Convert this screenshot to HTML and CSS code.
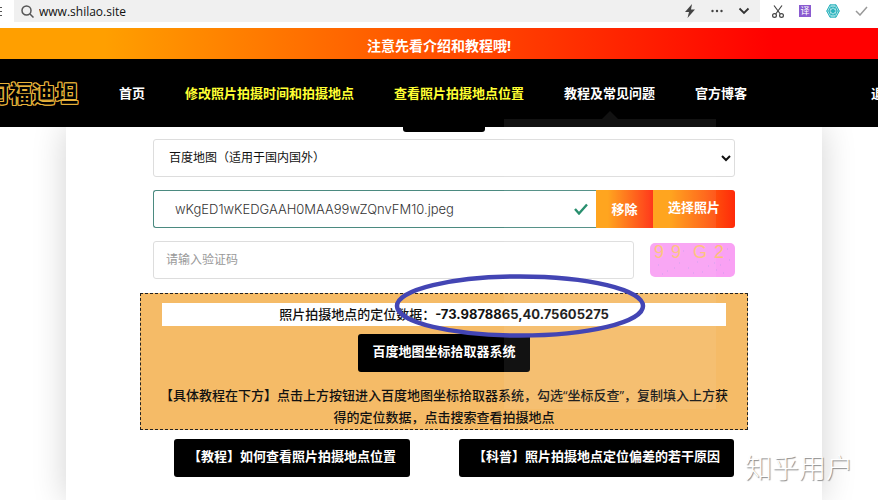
FILE: index.html
```html
<!DOCTYPE html>
<html lang="zh-CN">
<head>
    <meta charset="UTF-8">
    <title>查看照片拍摄地点位置</title>
    <link rel="stylesheet" href="styles.css">
</head>
<body>
    <div class="browser">
        <span class="menu-icon"></span>
        <div class="address">
            <svg class="search" width="13" height="13" viewBox="0 0 13 13">
                <circle cx="5.5" cy="5.5" r="4.5"/>
                <path d="M9 9l3.5 3.5"/>
            </svg>
            <input type="text" class="url" aria-label="网址" value="www.shilao.site">
            <svg width="12" height="14" viewBox="0 0 12 14">
                <path d="M8 0L1 8h4L3.500 14L11 5.500H7z" fill="#444"/>
            </svg>
            <svg width="12" height="4" viewBox="0 0 12 4" fill="#444">
                <circle cx="1.500" cy="2" r="1.200"/>
                <circle cx="6" cy="2" r="1.200"/>
                <circle cx="10.500" cy="2" r="1.200"/>
            </svg>
            <svg width="12" height="8" viewBox="0 0 12 8">
                <path d="M1.500 1.500L6 6l4.500-4.500" fill="none" stroke="#333" stroke-width="1.800"/>
            </svg>
        </div>
        <div class="tools">
            <svg width="12" height="13" viewBox="0 0 12 13" fill="none" stroke="#444" stroke-width="1.200">
                <path d="M2 0.500l6.300 8.500M10 0.500L3.700 9"/>
                <circle cx="2.500" cy="10.500" r="1.900"/>
                <circle cx="9.500" cy="10.500" r="1.900"/>
            </svg>
            <span class="translate">译</span>
            <svg width="14" height="14" viewBox="0 0 14 14" fill="none" stroke="#2ab3bd">
                <path d="M4 0.800h6L13.300 7L10 13.200H4L0.700 7z" fill="#a9e2e5"/>
                <path d="M0.700 7h12.600M4 0.800l6 12.400M10 0.800L4 13.200" stroke-width="0.600"/>
                <circle cx="7" cy="7" r="4"/>
                <circle cx="7" cy="7" r="1.500" fill="#2ab3bd"/>
            </svg>
            <svg width="13" height="10" viewBox="0 0 13 10">
                <path d="M1 5l4 4L12 1" fill="none" stroke="#999" stroke-width="1.500"/>
            </svg>
        </div>
    </div>

    <div class="notice">注意先看介绍和教程哦!</div>

    <header class="header">
        <div class="logo">阿福迪坦</div>
        <nav class="nav">
            <a href="#">首页</a>
            <a href="#" class="hot">修改照片拍摄时间和拍摄地点</a>
            <a href="#" class="hot">查看照片拍摄地点位置</a>
            <div class="dropdown">
                <a href="#">教程及常见问题</a>
                <div class="submenu"></div>
            </div>
            <a href="#">官方博客</a>
        </nav>
        <a href="#" class="logout">退出</a>
    </header>

    <main class="card">
        <button type="button" class="btn top-btn" aria-label="返回"></button>
        <form class="form">
            <select class="field map" aria-label="地图">
                <option>百度地图（适用于国内国外）</option>
            </select>
            <div class="file">
                <input type="text" class="field file-name" aria-label="照片" value="wKgED1wKEDGAAH0MAA99wZQnvFM10.jpeg">
                <svg class="tick" width="14" height="12" viewBox="0 0 14 12">
                    <path d="M1 6l4 4.500L13 1.500" fill="none" stroke="#198764" stroke-width="2.400"/>
                </svg>
                <button type="button" class="fire remove">移除</button>
                <button type="button" class="fire choose">选择照片</button>
            </div>
            <div class="verify">
                <input type="text" class="field code" aria-label="验证码" placeholder="请输入验证码">
                <svg class="captcha" width="85" height="34" viewBox="0 0 85 34">
                    <rect width="85" height="34" fill="#f9a1f4"/>
                    <g fill="#fcc077" font-size="18">
                        <text x="4" y="15">9</text>
                        <text x="21" y="15">9</text>
                        <text x="43" y="15">G</text>
                        <text x="64" y="15">2</text>
                    </g>
                    <path d="M8 22h1M17 28h1M29 20h1M38 25h1M47 19h1M52 29h1M58 23h1M64 20h1M66 27h1M70 22h1M73 30h1M79 17h1M33 8h1M77 6h1M12 31h1M43 30h1M24 25h1" stroke="#cf9bec"/>
                </svg>
            </div>
        </form>

        <section class="result">
            <p class="location">照片拍摄地点的定位数据：<b>-73.9878865,40.75605275</b></p>
            <button type="button" class="btn">百度地图坐标拾取器系统</button>
            <p class="tips">【具体教程在下方】点击上方按钮进入百度地图坐标拾取器系统，勾选“坐标反查”，复制填入上方获得的定位数据，点击搜索查看拍摄地点</p>
            <svg class="circle" width="252" height="66" viewBox="0 0 252 66">
                <ellipse cx="126" cy="33" rx="123" ry="29.500" fill="none" stroke="#4345b4" stroke-width="4.500"/>
            </svg>
        </section>

        <div class="links">
            <button type="button" class="btn">【教程】如何查看照片拍摄地点位置</button>
            <button type="button" class="btn">【科普】照片拍摄地点定位偏差的若干原因</button>
        </div>
    </main>

    <div class="watermark">知乎用户</div>
</body>
</html>
```
FILE: styles.css
```css
*{
    margin: 0;
    padding: 0;
    box-sizing: border-box;
}
html{
    overflow: hidden;
}
body{
    min-height: 100vh;
    display: flex;
    flex-direction: column;
    background: #fff;
    color: #111;
    font-family: "Open Sans","Noto Sans CJK SC",sans-serif;
    font-size: 13px;
}
button,input,select{
    font: inherit;
    color: inherit;
}
button{
    border: 0;
    white-space: nowrap;
    cursor: pointer;
}
a{
    color: inherit;
    text-decoration: none;
}

/* 浏览器地址栏 */
.browser{
    height: 28px;
    display: flex;
    align-items: flex-start;
}
.menu-icon{
    width: 2px;
    height: 9px;
    margin: 7px 12px 0 0;
    background: repeating-linear-gradient(#555 0 1px,#fff 1px 4px);
}
.address{
    flex: 1;
    height: 22px;
    display: flex;
    align-items: center;
    gap: 15px;
    padding: 0 10px 0 7px;
    background: #f0f0f0;
}
.search{
    margin-right: -10px;
    fill: none;
    stroke: #555;
    stroke-width: 1.5;
}
.url{
    flex: 1;
    min-width: 0;
    border: 0;
    background: none;
    font-size: 12px;
}
.tools{
    height: 22px;
    display: flex;
    align-items: center;
    gap: 15px;
    padding: 0 10px 0 12px;
}
.translate{
    width: 12px;
    height: 12px;
    line-height: 12px;
    text-align: center;
    font-size: 9px;
    color: #fff;
    background: #8a5bd0;
}

.notice{
    height: 31px;
    line-height: 35px;
    text-align: center;
    font-size: 14px;
    font-weight: bold;
    color: #fff;
    background: linear-gradient(90deg,#ff9f00 12%,#f00 88%);
}

/* 导航 */
.header{
    position: relative;
    z-index: 2;
    height: 68px;
    display: flex;
    align-items: center;
    padding-bottom: 2px;
    background: #000;
    color: #fff;
    font-weight: bold;
}
.logo{
    margin: 0 41px 0 -14px;
    font-size: 23px;
    color: #000;
    text-shadow: 1px 0 #e8b23a,-1px 0 #e8b23a,0 1px #e8b23a,0 -1px #e8b23a,1px 1px #e8b23a,-1px -1px #e8b23a,1px -1px #e8b23a,-1px 1px #e8b23a;
}
.nav{
    display: flex;
    gap: 40px;
    white-space: nowrap;
}
.hot{
    color: #ff3;
}
.dropdown{
    position: relative;
}
.submenu{
    position: absolute;
    top: 36px;
    left: 50%;
    width: 212px;
    height: 290px;
    margin-left: -106px;
    background: rgba(255,255,255,.07);
}
.submenu::before{
    content: "";
    position: absolute;
    bottom: 100%;
    left: 50%;
    margin-left: -8px;
    border: 8px solid transparent;
    border-top: 0;
    border-bottom-color: rgba(255,255,255,.07);
}
.logout{
    margin: 0 -19px 0 auto;
    white-space: nowrap;
}

/* 内容 */
.card{
    flex: 1;
    margin: 0 56px 0 66px;
    padding: 0 74px 23px;
    display: flex;
    flex-direction: column;
    align-items: center;
    background: #fff;
    box-shadow: 0 0 32px rgba(0,0,0,.18);
}
.btn{
    height: 38px;
    padding: 0 14px 5px;
    border-radius: 3px;
    background: #000;
    color: #fff;
    font-weight: bold;
}
.top-btn{
    width: 82px;
    margin: -33px 0 7px;
}
.form{
    width: 100%;
    padding: 0 13px;
    display: flex;
    flex-direction: column;
    gap: 13px;
}
.field{
    height: 38px;
    border: 1px solid #ddd;
    border-radius: 3px;
    background: #fff;
    font-size: 12px;
}
.map{
    width: 100%;
    padding: 0 0 2px 11px;
}
.file{
    display: flex;
    align-items: center;
}
.file-name{
    flex: 1;
    min-width: 0;
    padding: 0 36px 0 21px;
    border-color: #4b8a80;
    border-right: 0;
    border-radius: 3px 0 0 3px;
    color: #333;
    font-family: Inter,sans-serif;
    font-size: 13px;
    font-weight: 300;
}
.tick{
    margin: 0 8px 0 -22px;
}
.fire{
    height: 38px;
    padding-bottom: 2px;
    color: #fff;
    font-weight: bold;
    background: linear-gradient(90deg,#ff9f0f 20%,#ff2a0a);
}
.remove{
    width: 57px;
}
.choose{
    width: 82px;
    padding-bottom: 5px;
    border-radius: 0 3px 3px 0;
}
.verify{
    display: flex;
    align-items: center;
    gap: 16px;
}
.code{
    flex: 1;
    min-width: 0;
    padding: 0 12px 2px;
}
.code::placeholder{
    color: #999;
}
.captcha{
    border-radius: 5px;
    font-family: "Liberation Sans",sans-serif;
}
.result{
    position: relative;
    width: 100%;
    margin: 14px 0 9px;
    padding: 9px 13px 0;
    border: 1px dashed #222;
    background: #f5bb67;
    text-align: center;
    font-weight: 500;
    line-height: 22px;
}
.location{
    margin: 0 8px 8px;
    background: #fff;
    line-height: 23px;
}
.location b{
    font-family: Inter,sans-serif;
}
.tips{
    margin: 12px 0 1px;
}
.circle{
    position: absolute;
    z-index: 3;
    top: -21px;
    left: 253px;
}
.links{
    width: 100%;
    display: flex;
    justify-content: space-between;
    padding: 0 14px 0 34px;
}
.watermark{
    position: absolute;
    right: 25px;
    bottom: 12px;
    font-size: 27px;
    line-height: 40px;
    font-weight: 300;
    color: #fff;
    text-shadow: 1px 1px 1px #888;
}
```
